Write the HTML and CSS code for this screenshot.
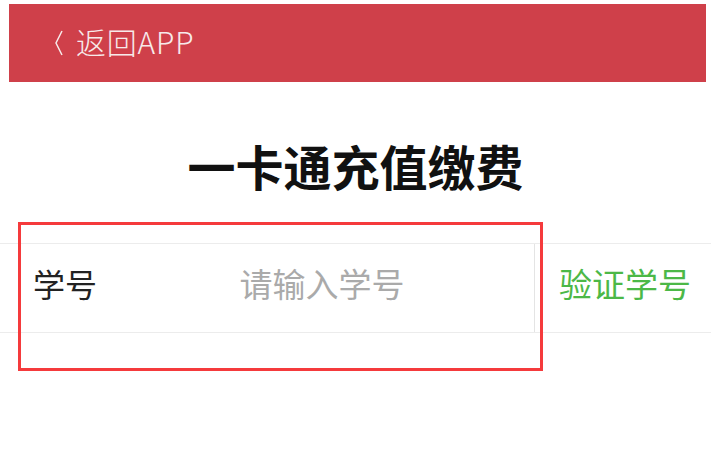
FILE: index.html
```html
<!DOCTYPE html>
<html lang="zh-CN">
<head>
  <meta charset="UTF-8">
  <meta name="viewport" content="width=device-width, initial-scale=1.0">
  <title>一卡通充值缴费</title>
  <link rel="stylesheet" href="styles.css">
</head>
<body>
  <div class="header">
    <a class="back" href="#">
      <svg class="back-icon" width="10" height="26" viewBox="0 0 10 26">
        <path d="M8 1 L2 13 L8 25" fill="none" stroke="#f7eaea" stroke-width="1.5"/>
      </svg>
      <span>返回APP</span>
    </a>
  </div>

  <h1 class="title">一卡通充值缴费</h1>

  <div class="form-row">
    <label class="label" for="studentId">学号</label>
    <input class="input" id="studentId" type="text" placeholder="请输入学号">
    <button class="verify">验证学号</button>
    <!-- 标注框 -->
    <div class="mark"></div>
  </div>
</body>
</html>
```

FILE: styles.css
```css
body {
  margin: 0;
  background-color: #fff;
  font-family: "Noto Sans CJK SC", "Noto Sans", sans-serif;
  width: 711px;
  height: 472px;
  overflow: hidden;
}
.header {
  margin: 4px 5px 0 9px;
  height: 78px;
  background-color: #cf404a;
  display: flex;
  align-items: center;
  padding-left: 45px;
}
.back {
  display: flex;
  align-items: center;
  gap: 12px;
  color: #f7eaea;
  text-decoration: none;
  font-size: 30px;
  font-weight: 300;
  letter-spacing: 0.8px;
}
.back span {
  margin-top: -4px;
}
.title {
  margin: 0;
  height: 161px;
  line-height: 166px;
  overflow: hidden;
  text-align: center;
  font-size: 48px;
  font-weight: bold;
  color: #111;
}
.form-row {
  position: relative;
  height: 88px;
  border-top: 1px solid #ececec;
  border-bottom: 1px solid #ececec;
  display: flex;
  align-items: center;
}
.label {
  width: 110px;
  padding-left: 33px;
  margin-top: -10px;
  box-sizing: border-box;
  font-size: 32px;
  color: #222;
}
.input {
  width: 425px;
  height: 100%;
  box-sizing: border-box;
  border: none;
  border-right: 1px solid #e4e4e4;
  outline: none;
  text-align: center;
  font-family: inherit;
  font-size: 33px;
  padding: 0 0 10px;
  background: transparent;
}
.input::placeholder {
  color: #aaa;
}
.verify {
  flex: 1;
  height: 100%;
  border: none;
  background: transparent;
  font-family: inherit;
  font-size: 33px;
  color: #4cb847;
  padding: 0 0 10px 4px;
  cursor: pointer;
}
.mark {
  position: absolute;
  left: 18px;
  top: -22px;
  width: 519px;
  height: 143px;
  border: 3px solid #f53a3c;
  pointer-events: none;
}
```
